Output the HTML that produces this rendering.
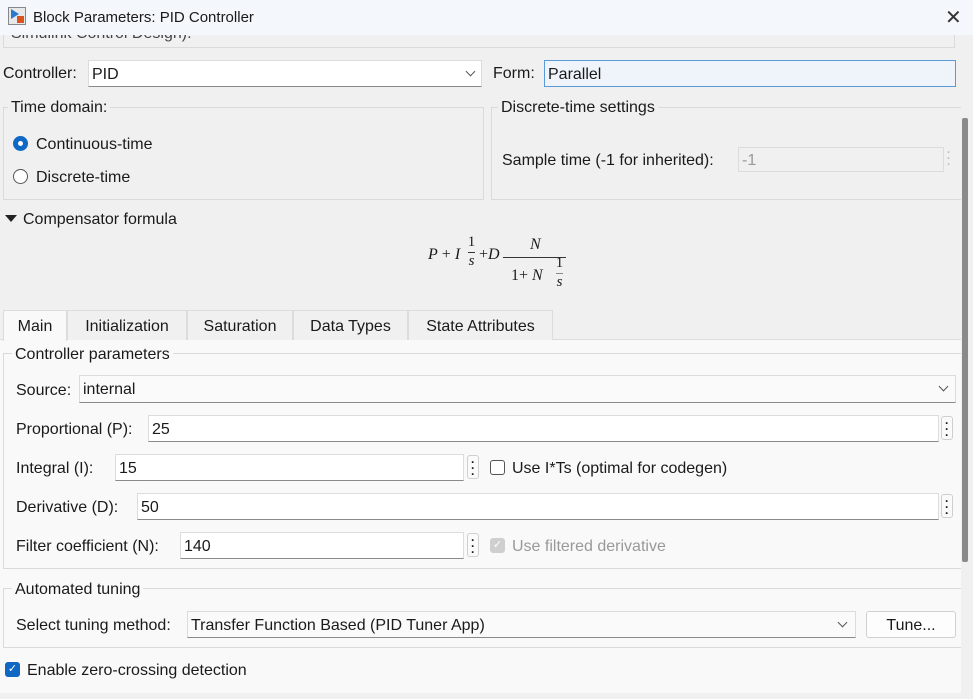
<!DOCTYPE html>
<html><head><meta charset="utf-8"><style>
*{box-sizing:border-box;margin:0;padding:0}
body{width:973px;height:699px;overflow:hidden;background:#f0f0f0;font-family:"Liberation Sans",sans-serif;font-size:16px;color:#1a1a1a;position:relative}
.a{position:absolute;white-space:nowrap}
.f{position:absolute;background:#fff;border:1px solid #dcdcdc;border-bottom:1px solid #8a8a8a;padding-left:3px;line-height:27px}
.g{position:absolute;border:1px solid #dadada}
.dots{position:absolute;width:12px;height:24px;border:1px solid #cfcfcf;border-radius:3px;background:#fafafa;font-weight:bold;font-size:12px;line-height:6px;text-align:center;padding-top:3px}
.chev{position:absolute;width:7px;height:7px;border-right:1px solid #555;border-bottom:1px solid #555;transform:rotate(45deg)}
.tab{position:absolute;top:310px;height:30px;border:1px solid #dcdcdc;border-bottom:none;background:#f0f0f0;line-height:32px;text-align:center}
.cb{position:absolute;width:15px;height:15px;border:1px solid #555;border-radius:3px;background:#fff}
i{font-family:"Liberation Serif",serif;font-style:italic}
.s{font-family:"Liberation Serif",serif}
</style></head><body>
<div class="a" style="left:0;top:0;width:973px;height:35px;background:#f4f7fb"></div>
<div class="a" style="left:8px;top:7px;width:18px;height:18px;border:1px solid #888;background:#e8e8e8"></div>
<div class="a" style="left:11px;top:9px;width:0;height:0;border-left:8px solid #2a7bd0;border-top:5px solid transparent;border-bottom:5px solid transparent"></div>
<div class="a" style="left:17px;top:16px;width:7px;height:7px;background:#d9541e"></div>
<div class="a" style="left:33px;top:9px;font-size:15px">Block Parameters: PID Controller</div>
<div class="a" style="left:945px;top:5px;font-size:20px;color:#333">✕</div>
<div class="a" style="left:3px;top:35px;width:952px;height:13px;border:1px solid #dadada;border-top:none;overflow:hidden"><div style="margin-top:-10px;margin-left:7px;color:#444">Simulink Control Design).</div></div>

<div class="a" style="left:3px;top:65px">Controller:</div>
<div class="f" style="left:88px;top:60px;width:394px;height:27px">PID</div>
<div class="chev" style="left:467px;top:68px"></div>
<div class="a" style="left:493px;top:65px">Form:</div>
<div class="f" style="left:544px;top:60px;width:412px;height:27px;background:#eff4fb;border:1px solid #5a9ad6">Parallel</div>

<div class="g" style="left:3px;top:107px;width:481px;height:93px;background:#f0f0f0"></div>
<div class="a" style="left:8px;top:99px;background:#f0f0f0;padding:0 3px">Time domain:</div>
<div class="a" style="left:13px;top:136px;width:15px;height:15px;border-radius:50%;background:#0f68c3"></div>
<div class="a" style="left:18px;top:141px;width:5px;height:5px;border-radius:50%;background:#fff"></div>
<div class="a" style="left:36px;top:136px">Continuous-time</div>
<div class="a" style="left:13px;top:169px;width:15px;height:15px;border-radius:50%;border:1px solid #555;background:#fff"></div>
<div class="a" style="left:36px;top:169px">Discrete-time</div>

<div class="g" style="left:491px;top:107px;width:470px;height:93px;border-right:none"></div>
<div class="a" style="left:498px;top:99px;background:#f0f0f0;padding:0 3px">Discrete-time settings</div>
<div class="a" style="left:502px;top:152px">Sample time (-1 for inherited):</div>
<div class="a" style="left:738px;top:147px;width:206px;height:25px;border:1px solid #dcdcdc;color:#999;padding-left:3px;line-height:25px">-1</div>
<div class="a" style="left:947px;top:150px;color:#bbb;font-size:11px;line-height:6px;font-weight:bold">·<br>·<br>·</div>

<div class="a" style="left:5px;top:215px;width:0;height:0;border-top:7px solid #222;border-left:6px solid transparent;border-right:6px solid transparent"></div>
<div class="a" style="left:23px;top:211px">Compensator formula</div>

<div class="a s" style="left:428px;top:246px;font-size:16px"><i>P</i> + <i>I</i></div>
<div class="a s" style="left:466px;top:235px;font-size:15px;text-align:center;width:11px;line-height:15px">1<span style="display:block;border-top:1px solid #333;margin:2px 2px 1px"></span><i>s</i></div>
<div class="a s" style="left:479px;top:246px;font-size:16px">+<i>D</i></div>
<div class="a s" style="left:530px;top:236px;font-size:16px"><i>N</i></div>
<div class="a" style="left:503px;top:257px;width:63px;border-top:1px solid #333"></div>
<div class="a s" style="left:511px;top:267px;font-size:16px">1+ <i>N</i></div>
<div class="a s" style="left:554px;top:256px;font-size:15px;text-align:center;width:11px;line-height:15px">1<span style="display:block;border-top:1px solid #888;margin:2px 2px 1px"></span><i>s</i></div>

<div class="a" style="left:0;top:339px;width:961px;height:354px;background:#f9f9f9;border-top:1px solid #dcdcdc"></div>
<div class="tab" style="left:3px;width:64px;background:#f9f9f9;height:31px">Main</div>
<div class="tab" style="left:67px;width:120px">Initialization</div>
<div class="tab" style="left:187px;width:106px">Saturation</div>
<div class="tab" style="left:293px;width:115px">Data Types</div>
<div class="tab" style="left:408px;width:145px">State Attributes</div>

<div class="g" style="left:3px;top:353px;width:958px;height:216px;border-right:none"></div>
<div class="a" style="left:12px;top:346px;background:#f9f9f9;padding:0 3px">Controller parameters</div>
<div class="a" style="left:16px;top:382px">Source:</div>
<div class="f" style="left:79px;top:375px;width:877px;height:28px;background:#fafafa">internal</div>
<div class="chev" style="left:940px;top:383px"></div>

<div class="a" style="left:16px;top:421px">Proportional (P):</div>
<div class="f" style="left:148px;top:415px;width:791px;height:27px">25</div>
<div class="dots" style="left:941px;top:416px">·<br>·<br>·</div>

<div class="a" style="left:16px;top:460px">Integral (I):</div>
<div class="f" style="left:115px;top:454px;width:349px;height:27px">15</div>
<div class="dots" style="left:467px;top:455px">·<br>·<br>·</div>
<div class="cb" style="left:490px;top:460px"></div>
<div class="a" style="left:512px;top:460px">Use I*Ts (optimal for codegen)</div>

<div class="a" style="left:16px;top:499px">Derivative (D):</div>
<div class="f" style="left:137px;top:493px;width:802px;height:27px">50</div>
<div class="dots" style="left:941px;top:494px">·<br>·<br>·</div>

<div class="a" style="left:16px;top:538px">Filter coefficient (N):</div>
<div class="f" style="left:180px;top:532px;width:284px;height:27px">140</div>
<div class="dots" style="left:467px;top:533px">·<br>·<br>·</div>
<div class="cb" style="left:490px;top:538px;background:#cfcfcf;border-color:#cfcfcf;color:#fff;font-size:11px;line-height:13px;text-align:center">✓</div>
<div class="a" style="left:512px;top:538px;color:#999">Use filtered derivative</div>

<div class="g" style="left:3px;top:588px;width:958px;height:60px;border-right:none"></div>
<div class="a" style="left:12px;top:581px;background:#f9f9f9;padding:0 3px">Automated tuning</div>
<div class="a" style="left:16px;top:617px">Select tuning method:</div>
<div class="f" style="left:187px;top:611px;width:669px;height:27px;background:#fafafa">Transfer Function Based (PID Tuner App)</div>
<div class="chev" style="left:839px;top:619px"></div>
<div class="a" style="left:866px;top:611px;width:90px;height:27px;border:1px solid #d0d0d0;border-radius:3px;background:#fdfdfd;line-height:27px;text-align:center">Tune...</div>

<div class="cb" style="left:5px;top:662px;background:#0f68c3;border-color:#0f68c3;color:#fff;font-size:11px;line-height:13px;text-align:center">✓</div>
<div class="a" style="left:27px;top:662px">Enable zero-crossing detection</div>

<div class="a" style="left:962px;top:118px;width:6px;height:444px;background:#8a8a8a;border-radius:2px"></div>
</body></html>
